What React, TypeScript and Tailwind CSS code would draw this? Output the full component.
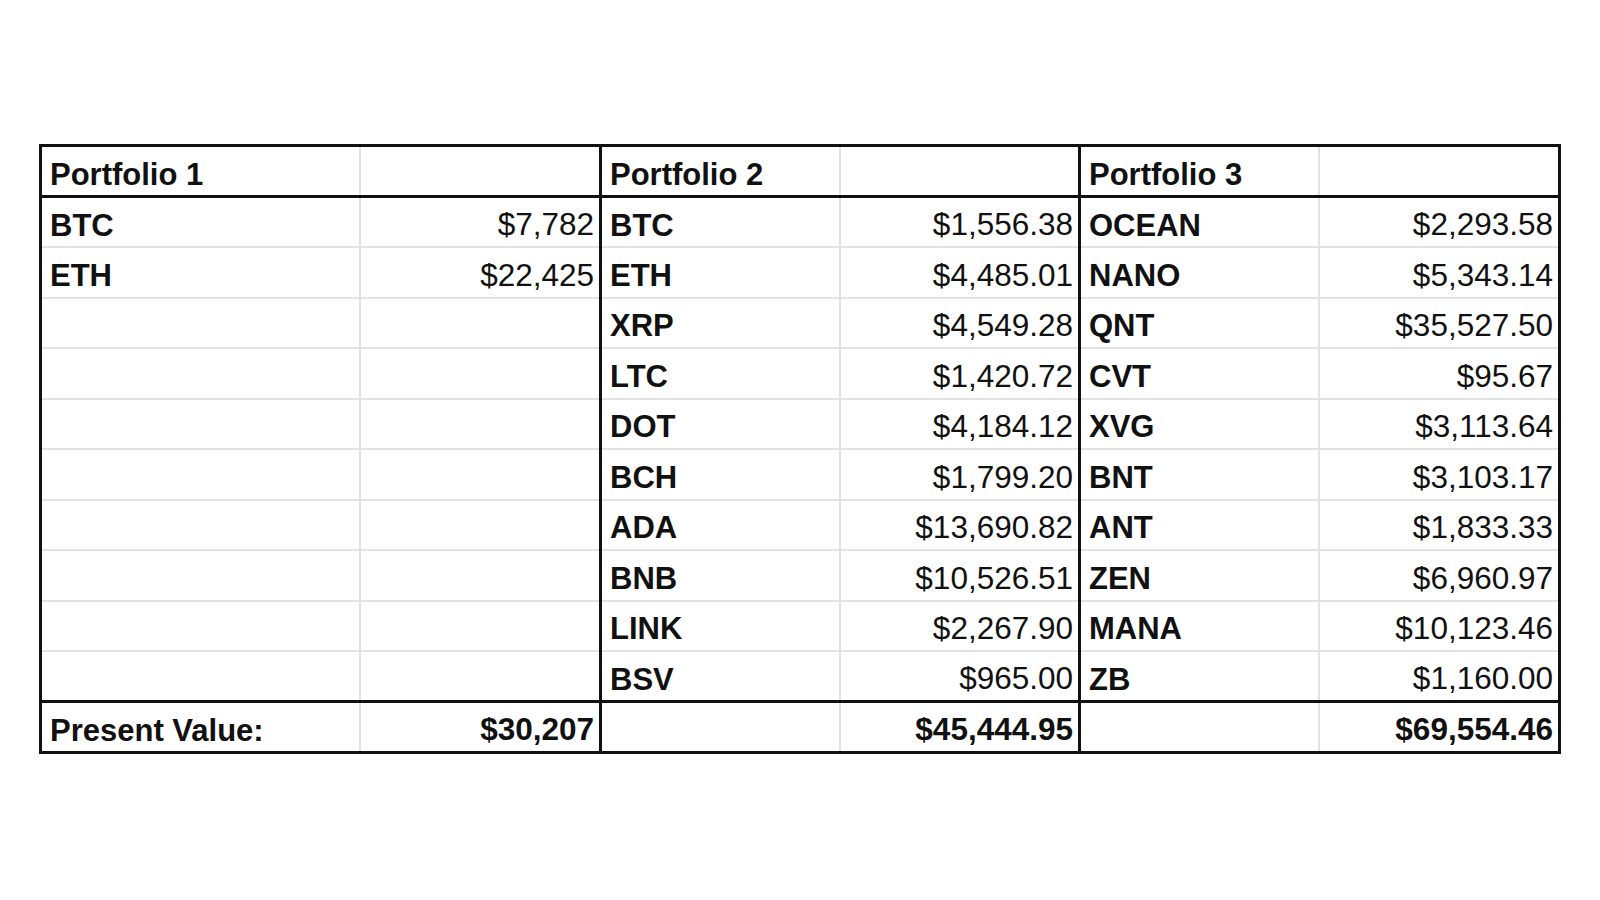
import React from "react";

const p2: [string, string][] = [
  ["BTC", "$1,556.38"],
  ["ETH", "$4,485.01"],
  ["XRP", "$4,549.28"],
  ["LTC", "$1,420.72"],
  ["DOT", "$4,184.12"],
  ["BCH", "$1,799.20"],
  ["ADA", "$13,690.82"],
  ["BNB", "$10,526.51"],
  ["LINK", "$2,267.90"],
  ["BSV", "$965.00"],
];
const p3: [string, string][] = [
  ["OCEAN", "$2,293.58"],
  ["NANO", "$5,343.14"],
  ["QNT", "$35,527.50"],
  ["CVT", "$95.67"],
  ["XVG", "$3,113.64"],
  ["BNT", "$3,103.17"],
  ["ANT", "$1,833.33"],
  ["ZEN", "$6,960.97"],
  ["MANA", "$10,123.46"],
  ["ZB", "$1,160.00"],
];
const p1: [string, string][] = [
  ["BTC", "$7,782"],
  ["ETH", "$22,425"],
  ...Array.from({ length: 8 }, () => ["", ""] as [string, string]),
];

const nameCls =
  "border-2 border-[#e2e2e2] pl-[8px] pr-[6px] pt-[6px] text-left font-bold text-[31px] align-middle whitespace-nowrap";
const valCls =
  "border-2 border-[#e2e2e2] pl-[4px] pr-[5px] pt-[6px] text-right text-[31.5px] align-middle whitespace-nowrap";
const sepR = "border-r-[3px] border-r-[#111]";

export default function App() {
  return (
    <div
      className="w-[1600px] h-[900px] bg-white pt-[144px] pl-[39px] text-[#111]"
      style={{ fontFamily: '"Liberation Sans", Arial, sans-serif' }}
    >
      <table className="table-fixed border-collapse border-[3px] border-[#111] leading-none">
        <colgroup>
          <col className="w-[319px]" />
          <col className="w-[241px]" />
          <col className="w-[239px]" />
          <col className="w-[240px]" />
          <col className="w-[239px]" />
          <col className="w-[241px]" />
        </colgroup>
        <tbody>
          <tr className="h-[51px] border-b-[3px] border-b-[#111]">
            <td className={nameCls}>Portfolio 1</td>
            <td className={`${valCls} ${sepR}`}></td>
            <td className={nameCls}>Portfolio 2</td>
            <td className={`${valCls} ${sepR}`}></td>
            <td className={nameCls}>Portfolio 3</td>
            <td className={valCls}></td>
          </tr>
          {p2.map((_, i) => (
            <tr key={i} className="h-[50.5px]">
              <td className={nameCls}>{p1[i][0]}</td>
              <td className={`${valCls} ${sepR}`}>{p1[i][1]}</td>
              <td className={nameCls}>{p2[i][0]}</td>
              <td className={`${valCls} ${sepR}`}>{p2[i][1]}</td>
              <td className={nameCls}>{p3[i][0]}</td>
              <td className={valCls}>{p3[i][1]}</td>
            </tr>
          ))}
          <tr className="h-[51px] border-t-[3px] border-t-[#111]">
            <td className={nameCls}>Present Value:</td>
            <td className={`${valCls} ${sepR} font-bold`}>$30,207</td>
            <td className={nameCls}></td>
            <td className={`${valCls} ${sepR} font-bold`}>$45,444.95</td>
            <td className={nameCls}></td>
            <td className={`${valCls} font-bold`}>$69,554.46</td>
          </tr>
        </tbody>
      </table>
    </div>
  );
}
